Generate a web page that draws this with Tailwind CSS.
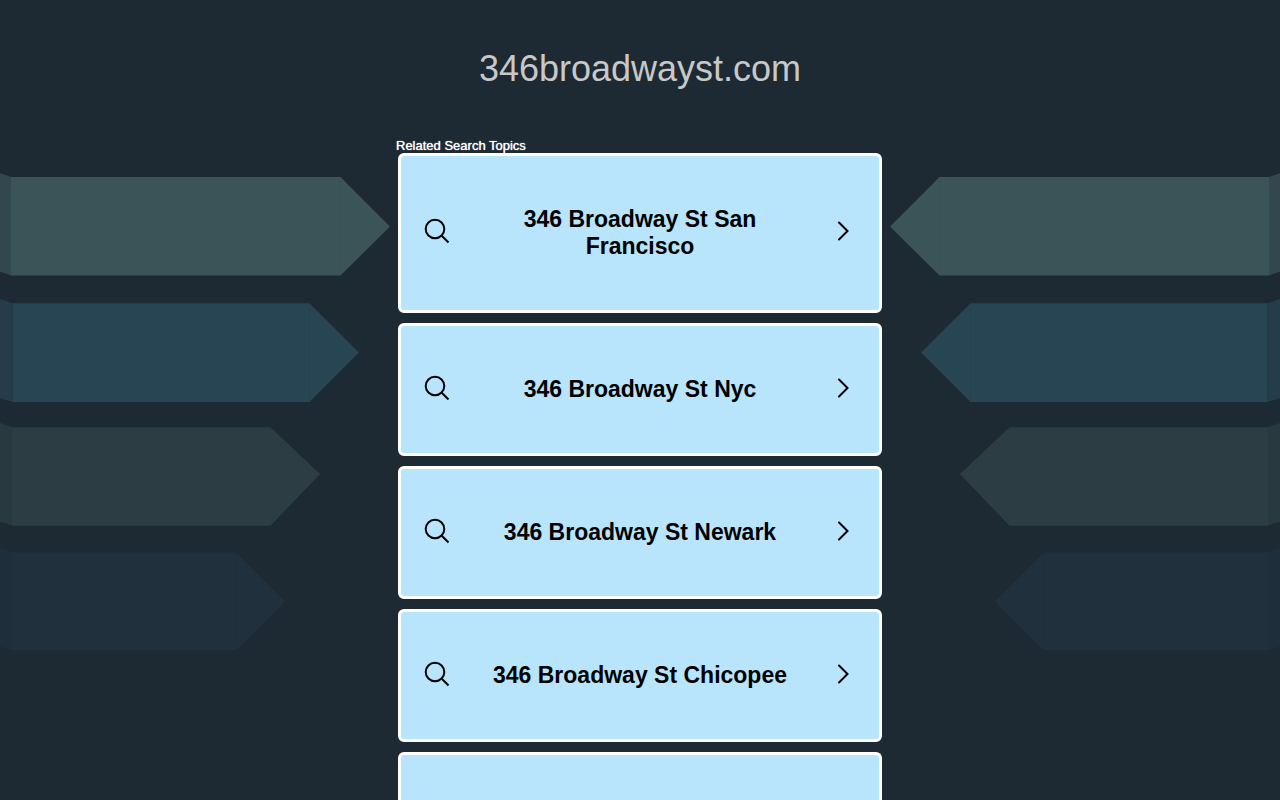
<!DOCTYPE html>
<html lang="en">
<head>
  <meta charset="UTF-8" />
  <meta name="viewport" content="width=device-width, initial-scale=1.0" />
  <title>346broadwayst.com</title>
  <script src="https://cdn.jsdelivr.net/npm/@tailwindcss/browser@4"></script>
</head>
<body class="relative min-h-screen overflow-x-hidden bg-[#1e2a33] font-['Liberation_Sans',Arial,sans-serif]">
  <!-- Shared shapes -->
  <svg class="hidden" aria-hidden="true">
    <symbol id="arrows" viewBox="0 0 390 490">
      <path fill="#32474e" d="M0 13l11 4v98.500l-11-4z" />
      <path fill="#3b5457" d="M11 17h329.500l49.500 49.500-49.500 49H11z" />
      <path stroke="#385054" d="M340.500 18v97" />
      <path fill="#253d4b" d="M0 139l12.500 4.300v98.700l-12.500-4z" />
      <path fill="#284553" d="M12.500 143.300h297l49.500 49.200-49.500 49.500h-297z" />
      <path stroke="#264250" d="M309.500 144v97" />
      <path fill="#28393f" d="M0 263l12 4v98.500l-12-4z" />
      <path fill="#2c3e44" d="M12 267.200h258.500l49.500 46.800-49.500 51.700H12z" />
      <path fill="#1e2e3a" d="M0 388l12 4.500v98l-12-4z" />
      <path fill="#20313d" d="M12 392.500h224l49 49-49 49H12z" />
      <path stroke="#1f2f3a" d="M236 393v97" />
    </symbol>
    <symbol id="search" viewBox="0 0 26 26">
      <g fill="none" stroke="#000" stroke-width="2">
        <circle cx="11" cy="11" r="9.300" />
        <path d="M17.500 17.500l7 7" />
      </g>
    </symbol>
    <symbol id="chevron" viewBox="0 0 12 20">
      <path fill="none" stroke="#000" stroke-width="2" stroke-linecap="round" d="M2 1.500l8.500 8.500L2 18.500" />
    </symbol>
  </svg>

  <!-- Background arrows -->
  <svg class="absolute top-40 left-0 w-[390px] h-[490px]" aria-hidden="true"><use href="#arrows" /></svg>
  <svg class="absolute top-40 right-0 w-[390px] h-[490px] -scale-x-100" aria-hidden="true"><use href="#arrows" /></svg>

  <header class="pt-12 text-center">
    <h1 class="text-4xl leading-[42px] text-[#c8c8c8]">346broadwayst.com</h1>
  </header>

  <main class="relative mx-auto mt-12 max-w-[488px]">
    <h2 class="text-[13px] leading-[15px] text-white text-shadow-[0_0_1px_#fff]">Related Search Topics</h2>
    <nav class="flex flex-col gap-[10px] px-0.5" aria-label="Related Search Topics">
      <a href="#" class="flex items-center rounded-md border-3 border-white bg-[#b8e5fc] pr-[30px] pl-[23px] py-[50px] text-[23px] leading-[27px] font-bold text-black">
        <svg class="-mt-1 size-[26px] shrink-0"><use href="#search" /></svg>
        <span class="flex-1 pr-[55px] pl-12 text-center">346 Broadway St San Francisco</span>
        <svg class="-mt-1 h-5 w-3 shrink-0"><use href="#chevron" /></svg>
      </a>
      <a href="#" class="flex items-center rounded-md border-3 border-white bg-[#b8e5fc] pr-[30px] pl-[23px] py-[50px] text-[23px] leading-[27px] font-bold text-black">
        <svg class="-mt-1 size-[26px] shrink-0"><use href="#search" /></svg>
        <span class="flex-1 pr-[7px] text-center">346 Broadway St Nyc</span>
        <svg class="-mt-1 h-5 w-3 shrink-0"><use href="#chevron" /></svg>
      </a>
      <a href="#" class="flex items-center rounded-md border-3 border-white bg-[#b8e5fc] pr-[30px] pl-[23px] py-[50px] text-[23px] leading-[27px] font-bold text-black">
        <svg class="-mt-1 size-[26px] shrink-0"><use href="#search" /></svg>
        <span class="flex-1 pr-[7px] text-center">346 Broadway St Newark</span>
        <svg class="-mt-1 h-5 w-3 shrink-0"><use href="#chevron" /></svg>
      </a>
      <a href="#" class="flex items-center rounded-md border-3 border-white bg-[#b8e5fc] pr-[30px] pl-[23px] py-[50px] text-[23px] leading-[27px] font-bold text-black">
        <svg class="-mt-1 size-[26px] shrink-0"><use href="#search" /></svg>
        <span class="flex-1 pr-[7px] text-center">346 Broadway St Chicopee</span>
        <svg class="-mt-1 h-5 w-3 shrink-0"><use href="#chevron" /></svg>
      </a>
      <a href="#" class="h-12 rounded-t-md border-3 border-b-0 border-white bg-[#b8e5fc]" aria-label="More topics"></a>
    </nav>
  </main>
</body>
</html>
